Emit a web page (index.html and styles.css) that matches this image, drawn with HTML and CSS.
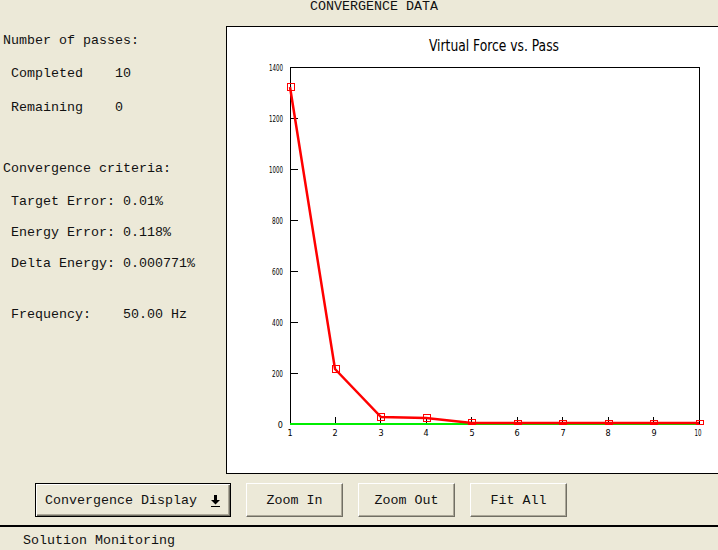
FILE: index.html
```html
<!DOCTYPE html>
<html lang="en">
<head>
<meta charset="UTF-8">
<title>Convergence Data</title>
<link rel="stylesheet" href="styles.css">
</head>
<body>
<div class="window">
	<div class="head">CONVERGENCE DATA</div>
	<div class="main">
		<div class="info">
			<div class="row r1">Number of passes:</div>
			<div class="row r2 sub">Completed    10</div>
			<div class="row r3 sub">Remaining    0</div>
			<div class="row r4">Convergence criteria:</div>
			<div class="row r5 sub">Target Error: 0.01%</div>
			<div class="row r6 sub">Energy Error: 0.118%</div>
			<div class="row r7 sub">Delta Energy: 0.000771%</div>
			<div class="row r8 sub">Frequency:    50.00 Hz</div>
		</div>
		<div class="chart">
			<svg width="492" height="446" viewBox="0 0 492 446">
				<text class="title" x="267" y="24" text-anchor="middle" textLength="130" lengthAdjust="spacingAndGlyphs">Virtual Force vs. Pass</text>

				<!-- plot box -->
				<rect x="63.5" y="40.5" width="409" height="357" fill="none" stroke="#000" stroke-width="1"/>

				<!-- y ticks -->
				<g stroke="#000" stroke-width="1">
					<line x1="63" y1="91.5" x2="71" y2="91.5"/>
					<line x1="63" y1="142.5" x2="71" y2="142.5"/>
					<line x1="63" y1="193.5" x2="71" y2="193.5"/>
					<line x1="63" y1="244.5" x2="71" y2="244.5"/>
					<line x1="63" y1="295.5" x2="71" y2="295.5"/>
					<line x1="63" y1="346.5" x2="71" y2="346.5"/>
				</g>
				<g class="lbl" text-anchor="end">
					<text x="56" y="44" textLength="14" lengthAdjust="spacingAndGlyphs">1400</text>
					<text x="56" y="95" textLength="14" lengthAdjust="spacingAndGlyphs">1200</text>
					<text x="56" y="146" textLength="14" lengthAdjust="spacingAndGlyphs">1000</text>
					<text x="56" y="197" textLength="11" lengthAdjust="spacingAndGlyphs">800</text>
					<text x="56" y="248" textLength="11" lengthAdjust="spacingAndGlyphs">600</text>
					<text x="56" y="299" textLength="11" lengthAdjust="spacingAndGlyphs">400</text>
					<text x="56" y="350" textLength="11" lengthAdjust="spacingAndGlyphs">200</text>
					<text x="56" y="401">0</text>
				</g>

				<!-- x ticks -->
				<g stroke="#000" stroke-width="1">
					<line x1="108.5" y1="390" x2="108.5" y2="397"/>
					<line x1="153.5" y1="390" x2="153.5" y2="397"/>
					<line x1="199.5" y1="390" x2="199.5" y2="397"/>
					<line x1="244.5" y1="390" x2="244.5" y2="397"/>
					<line x1="290.5" y1="390" x2="290.5" y2="397"/>
					<line x1="335.5" y1="390" x2="335.5" y2="397"/>
					<line x1="381.5" y1="390" x2="381.5" y2="397"/>
					<line x1="426.5" y1="390" x2="426.5" y2="397"/>
				</g>
				<g class="lbl" text-anchor="middle">
					<text x="63" y="409">1</text>
					<text x="108" y="409">2</text>
					<text x="154" y="409">3</text>
					<text x="199" y="409">4</text>
					<text x="245" y="409">5</text>
					<text x="290" y="409">6</text>
					<text x="336" y="409">7</text>
					<text x="381" y="409">8</text>
					<text x="427" y="409">9</text>
					<text x="471" y="409" textLength="7" lengthAdjust="spacingAndGlyphs">10</text>
				</g>

				<line x1="63" y1="397" x2="472" y2="397" stroke="#00ee00" stroke-width="2"/>

				<!-- series -->
				<polyline fill="none" stroke="#ff0000" stroke-width="2.5" points="63,60 108,342 154,390 199,391 245,396 290,396 336,396 381,396 427,396 472,396"/>
				<g fill="none" stroke="#ff0000" stroke-width="1">
					<rect x="60.5" y="56.5" width="7" height="7"/>
					<rect x="105.5" y="338.5" width="7" height="7"/>
					<rect x="150.5" y="386.5" width="7" height="7"/>
					<rect x="196.5" y="387.5" width="7" height="7"/>
					<rect x="241.5" y="392.5" width="7" height="5"/>
					<rect x="287.5" y="393.5" width="7" height="4"/>
					<rect x="332.5" y="393.5" width="7" height="4"/>
					<rect x="378.5" y="393.5" width="7" height="4"/>
					<rect x="423.5" y="393.5" width="7" height="4"/>
					<rect x="469.5" y="393.5" width="7" height="4"/>
				</g>
			</svg>
		</div>
	</div>
	<div class="buttons">
		<div class="btn drop">
			<span>Convergence Display</span>
			<svg class="arrow" width="9" height="12" viewBox="0 0 9 12">
				<rect x="3" y="0" width="3" height="5" fill="#000"/>
				<polygon points="0,5 9,5 4.5,9.5" fill="#000"/>
				<rect x="0" y="11" width="9" height="1" fill="#000"/>
			</svg>
		</div>
		<div class="btn">Zoom In</div>
		<div class="btn">Zoom Out</div>
		<div class="btn">Fit All</div>
	</div>
	<div class="status">Solution Monitoring</div>
</div>
</body>
</html>
```

FILE: styles.css
```css
html,
body {
	margin: 0;
	padding: 0;
	background: #ece9d8;
}
.window {
	width: 718px;
	height: 550px;
	overflow: hidden;
	font: 13.333px/13px "Liberation Mono", "Courier New", monospace;
	color: #111;
}
.head {
	height: 26px;
	padding-left: 30px;
	text-align: center;
	line-height: 13px;
}
.main {
	display: flex;
	height: 448px;
}
.info {
	width: 226px;
	flex-shrink: 0;
	padding-left: 3px;
	box-sizing: border-box;
}
.row {
	height: 16px;
	line-height: 16px;
	white-space: pre;
}
.sub {
	padding-left: 8px;
}
.r1 { margin-top: 7px; }
.r2 { margin-top: 17px; }
.r3 { margin-top: 18px; }
.r4 { margin-top: 45px; }
.r5 { margin-top: 17px; }
.r6 { margin-top: 15px; }
.r7 { margin-top: 15px; }
.r8 { margin-top: 35px; }
.chart {
	flex: 1;
	min-width: 500px;
	background: #fff;
	border: 1px solid #000;
	border-right: none;
}
.chart svg {
	display: block;
}
.title {
	font: 16px "DejaVu Sans Condensed", "Liberation Sans", sans-serif;
	fill: #000;
}
.lbl text {
	font: 9px "DejaVu Sans Condensed", "Liberation Sans", sans-serif;
	fill: #000;
}
.buttons {
	display: flex;
	align-items: flex-start;
	padding-left: 35px;
	margin-top: 9px;
	height: 34px;
	gap: 16px;
}
.btn {
	width: 97px;
	height: 34px;
	box-sizing: border-box;
	display: flex;
	align-items: center;
	justify-content: center;
	border: 1px solid;
	border-color: #fff #716f64 #716f64 #fff;
	box-shadow: inset -1px -1px #aca899;
	background: #ece9d8;
}
.btn.drop {
	width: 196px;
	border: 1px solid #000;
	box-shadow: inset 1px 1px #fff, inset -1px -1px #716f64, inset -2px -2px #aca899;
	justify-content: space-between;
	padding: 0 10px 0 9px;
}
.btn + .btn {
	margin-left: -1px;
}
.arrow {
	display: block;
	margin-top: 1px;
}
.status {
	margin-top: 8px;
	border-top: 2px solid #000;
	padding: 7px 0 0 23px;
	line-height: 13px;
}
```
